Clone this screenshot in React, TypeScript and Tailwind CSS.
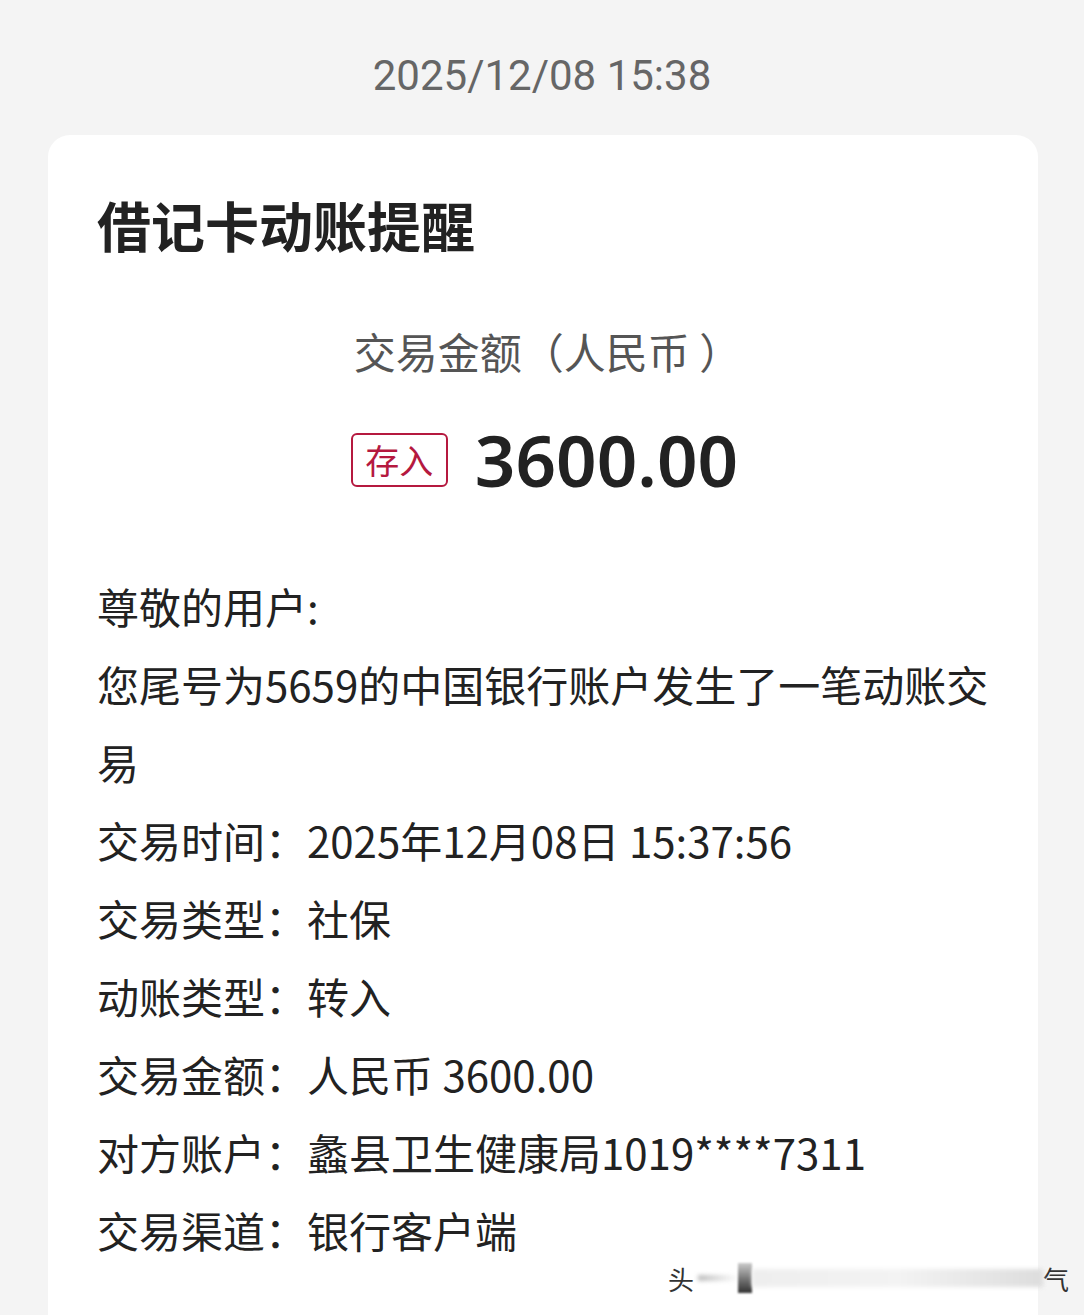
import React from 'react';

// Debit card movement notice (bank SMS-style card)

const cjk = '"Noto Sans CJK SC", "Noto Sans", sans-serif';

const rows: { label: string; value: string }[] = [
  { label: '交易时间', value: '2025年12月08日 15:37:56' },
  { label: '交易类型', value: '社保' },
  { label: '动账类型', value: '转入' },
  { label: '交易金额', value: '人民币 3600.00' },
  { label: '对方账户', value: '蠡县卫生健康局1019****7311' },
  { label: '交易渠道', value: '银行客户端' },
];

const App: React.FC = () => {
  return (
    <div
      className="relative h-[1315px] w-[1084px] overflow-hidden bg-[#f4f4f4]"
      style={{ fontFamily: cjk }}
    >
      {/* Timestamp */}
      <div
        className="flex h-[135px] items-center justify-center pt-[15px] text-[42px] text-[#666666]"
        style={{ fontFamily: 'Roboto, sans-serif' }}
      >
        2025/12/08 15:38
      </div>

      {/* Card */}
      <div className="ml-[48px] w-[990px] rounded-[22px] bg-white pb-[120px] pl-[49px] pr-[40px] pt-[54px]">
        <h1 className="text-[54px] font-bold leading-[72px] text-[#222222]">借记卡动账提醒</h1>

        <div className="mt-[62px] text-center text-[42px] leading-[56px] text-[#555555]">
          交易金额（人民币 ）
        </div>

        <div className="mt-[36px] flex items-center justify-center gap-[27px] pr-[6px]">
          <span className="flex h-[54px] w-[97px] items-center justify-center rounded-[6px] border-2 border-[#b5193f] text-[34px] leading-none text-[#b5193f]">
            存入
          </span>
          <span
            className="text-[71px] font-semibold leading-[90px] text-[#222222]"
            style={{ fontFamily: '"Noto Sans", sans-serif' }}
          >
            3600.00
          </span>
        </div>

        <div className="mt-[62px] text-[42px] leading-[78px] text-[#222222]">
          <p>尊敬的用户:</p>
          <p>您尾号为5659的中国银行账户发生了一笔动账交易</p>
          {rows.map((r) => (
            <p key={r.label} className="flex whitespace-nowrap">
              <span className="w-[210px] shrink-0">{r.label}：</span>
              <span>{r.value}</span>
            </p>
          ))}
        </div>
      </div>

      {/* Watermark */}
      <div className="absolute left-[668px] top-[1258px] flex h-[40px] items-center text-[26px] text-[#333333]">
        <span>头</span>
        <div className="ml-[4px] flex h-[30px] w-[345px] items-center">
          <div className="h-[6px] w-[40px] bg-gradient-to-r from-[#bbbbbb] to-transparent blur-[2px]" />
          <div className="h-[30px] w-[14px] bg-gradient-to-b from-[#cccccc] to-[#333333] blur-[1px]" />
          <div className="h-[18px] flex-1 bg-gradient-to-r from-[#eeeeee] via-[#f3f3f3] to-[#dddddd] blur-[2px]" />
        </div>
        <span>气</span>
      </div>
    </div>
  );
};

export default App;
